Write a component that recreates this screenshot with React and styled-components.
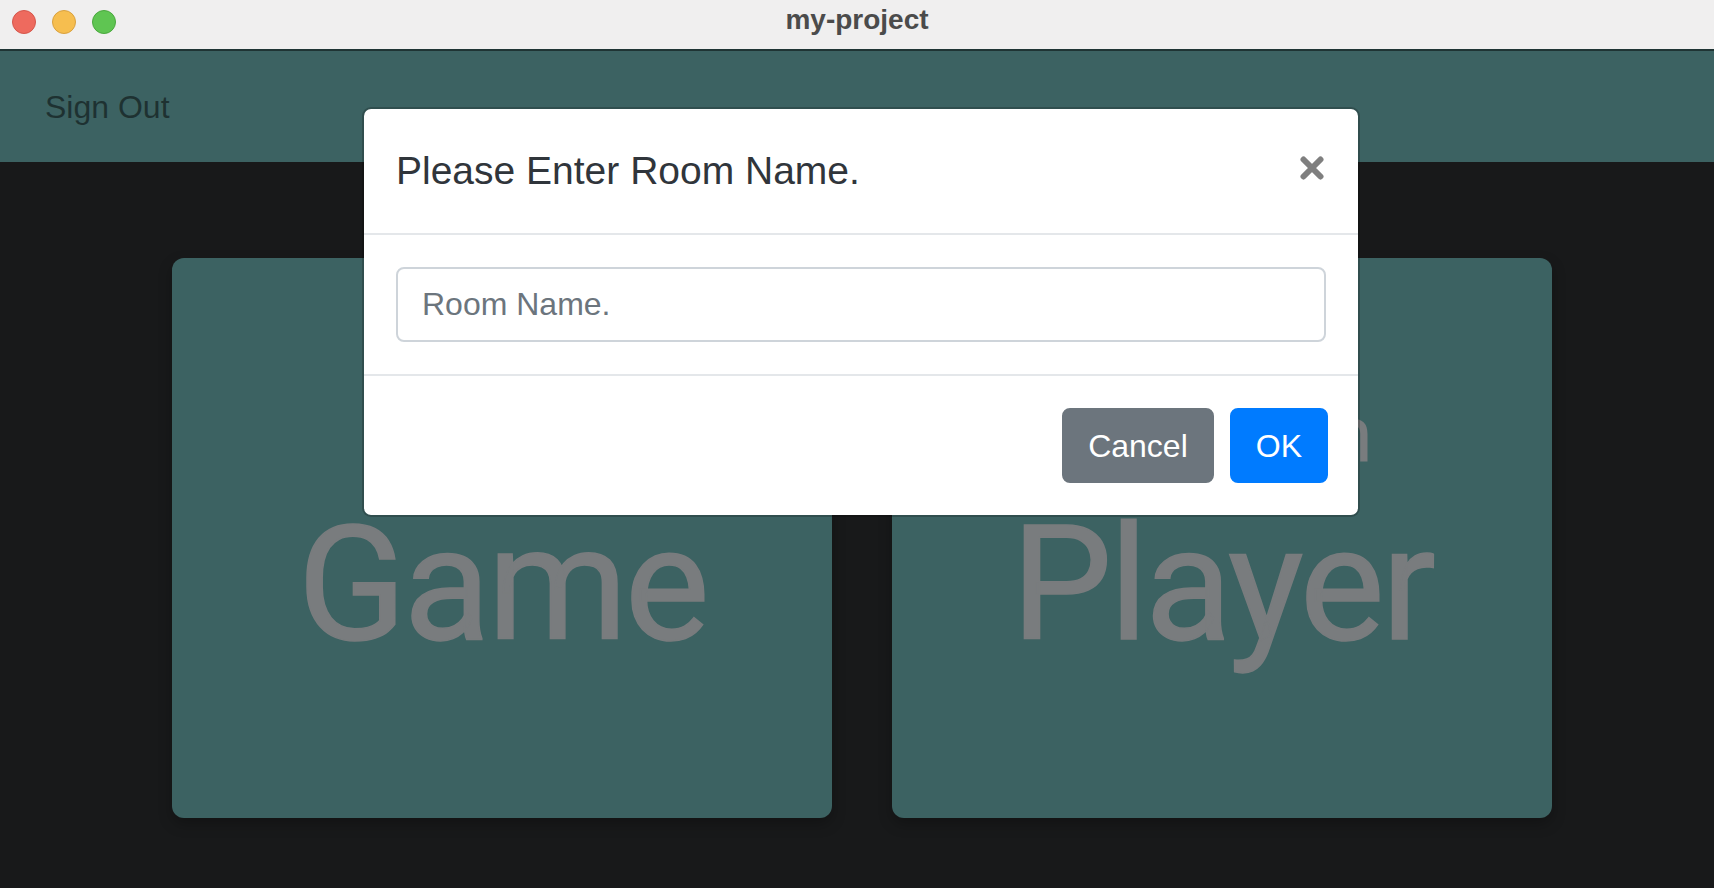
import styled, { createGlobalStyle } from "styled-components";

const GlobalStyle = createGlobalStyle`
  * {
    box-sizing: border-box;
  }
  html, body {
    margin: 0;
    padding: 0;
    background: #18191a;
    font-family: "Liberation Sans", Arial, sans-serif;
  }
`;

const Window = styled.div`
  position: relative;
  width: 100%;
  min-height: 100vh;
  background: #18191a;
  overflow: hidden;
`;

const TitleBar = styled.div`
  height: 51px;
  background: #f0efef;
  border-bottom: 2px solid #1f3434;
  display: grid;
  grid-template-columns: 1fr auto 1fr;
  align-items: start;
`;

const Lights = styled.div`
  display: flex;
  gap: 16px;
  padding: 10px 0 0 12px;
`;

const Light = styled.span`
  width: 24px;
  height: 24px;
  border-radius: 50%;
  background: ${(p) => p.color};
  border: 1px solid ${(p) => p.edge};
`;

const WindowTitle = styled.div`
  font-size: 28px;
  line-height: 40px;
  font-weight: 700;
  color: #4b4b4b;
`;

const NavBar = styled.nav`
  height: 111px;
  background: #3c6262;
  display: flex;
  align-items: center;
  padding-left: 45px;
`;

const NavLink = styled.a`
  font-size: 32px;
  line-height: 48px;
  color: rgba(0, 0, 0, 0.5);
  text-decoration: none;
  cursor: pointer;
`;

const Main = styled.main`
  display: flex;
  justify-content: center;
  gap: 60px;
  padding: 96px 0 0 10px;
`;

const Card = styled.div`
  width: 660px;
  height: 560px;
  background: #3c6262;
  border-radius: 12px;
  box-shadow: 0 6px 14px rgba(0, 0, 0, 0.25);
  display: flex;
  flex-direction: column;
  align-items: center;
  justify-content: center;
  padding-bottom: 9px;
  font-family: Roboto, "Liberation Sans", sans-serif;
  color: #797c7e;
  cursor: pointer;
`;

const CardSub = styled.div`
  font-size: 80px;
  line-height: 96px;
  letter-spacing: -1px;
  margin-bottom: 6px;
  padding-left: 8px;
`;

const CardTitle = styled.div`
  font-size: 160px;
  line-height: 192px;
  letter-spacing: -3px;
  -webkit-text-stroke: 1.5px #797c7e;
`;

const Overlay = styled.div`
  position: absolute;
  top: 0;
  left: 0;
  right: 0;
  display: flex;
  justify-content: center;
  padding: 107px 0 0 8px;
`;

const Modal = styled.div`
  width: 998px;
  background: #fff;
  background-clip: padding-box;
  border: 2px solid rgba(0, 0, 0, 0.2);
  border-radius: 9px;
`;

const ModalHeader = styled.div`
  display: flex;
  justify-content: space-between;
  align-items: flex-start;
  padding: 32px;
  border-bottom: 2px solid #e4e7ea;
`;

const ModalTitle = styled.h5`
  margin: 0;
  font-size: 39px;
  line-height: 60px;
  font-weight: 400;
  color: #30353b;
`;

const CloseButton = styled.button`
  border: 0;
  background: transparent;
  padding: 0;
  margin: 15px 2px 0 0;
  width: 24px;
  height: 24px;
  display: flex;
  cursor: pointer;
`;

const ModalBody = styled.div`
  padding: 32px;
`;

const Input = styled.input`
  display: block;
  width: 100%;
  height: 75px;
  padding: 0 24px;
  font-family: inherit;
  font-size: 32px;
  color: #495057;
  border: 2px solid #ced4da;
  border-radius: 8px;
  outline: none;
  &::placeholder {
    color: #6c757d;
  }
`;

const ModalFooter = styled.div`
  display: flex;
  justify-content: flex-end;
  gap: 16px;
  padding: 32px 30px 32px 32px;
  border-top: 2px solid #e4e7ea;
`;

const Button = styled.button`
  height: 75px;
  padding: 0 24px;
  font-family: inherit;
  font-size: 32px;
  line-height: 48px;
  color: #fff;
  background: ${(p) => (p.variant === "primary" ? "#007bff" : "#6c757d")};
  border: 2px solid ${(p) => (p.variant === "primary" ? "#007bff" : "#6c757d")};
  border-radius: 8px;
  cursor: pointer;
`;

const App = () => {
  return (
    <>
      <GlobalStyle />
      <Window>
        <TitleBar>
          <Lights>
            <Light color="#ee6a5e" edge="#d5564b" />
            <Light color="#f6be4f" edge="#d9a13f" />
            <Light color="#5fc552" edge="#4aa83e" />
          </Lights>
          <WindowTitle>my-project</WindowTitle>
          <div />
        </TitleBar>
        <NavBar>
          <NavLink>Sign Out</NavLink>
        </NavBar>
        <Main>
          <Card>
            <CardSub>Create</CardSub>
            <CardTitle>Game</CardTitle>
          </Card>
          <Card>
            <CardSub>Random</CardSub>
            <CardTitle>Player</CardTitle>
          </Card>
        </Main>
        <Overlay>
          <Modal>
            <ModalHeader>
              <ModalTitle>Please Enter Room Name.</ModalTitle>
              <CloseButton aria-label="Close">
                <svg width="24" height="24" viewBox="0 0 24 24">
                  <path
                    d="M3.5 3.5 L20.5 20.5 M20.5 3.5 L3.5 20.5"
                    stroke="#7f7f7f"
                    strokeWidth="6"
                    strokeLinecap="round"
                  />
                </svg>
              </CloseButton>
            </ModalHeader>
            <ModalBody>
              <Input placeholder="Room Name." />
            </ModalBody>
            <ModalFooter>
              <Button>Cancel</Button>
              <Button variant="primary">OK</Button>
            </ModalFooter>
          </Modal>
        </Overlay>
      </Window>
    </>
  );
};

export default App;
